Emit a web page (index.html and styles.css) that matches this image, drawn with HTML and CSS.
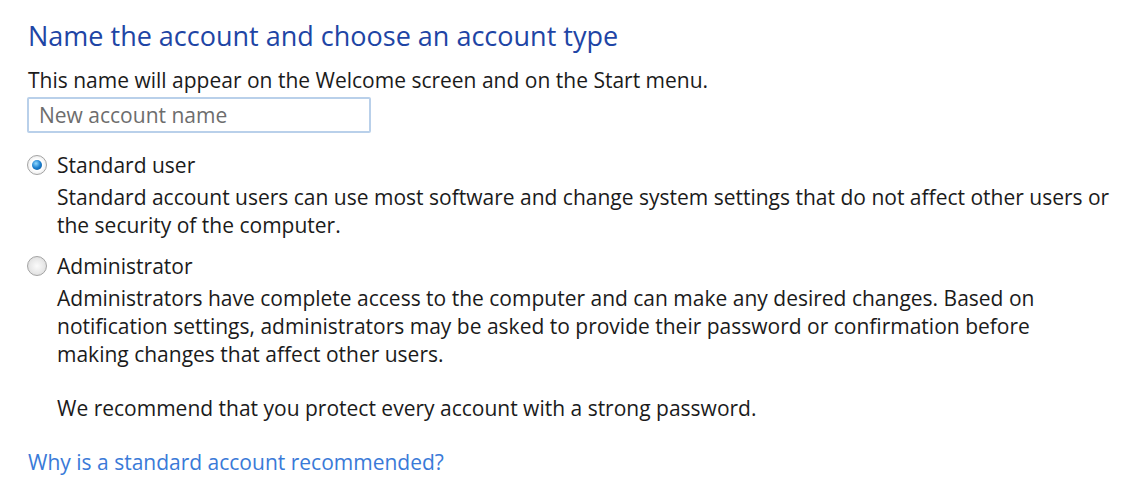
FILE: index.html
```html
<!DOCTYPE html>
<html>
<head>
<meta charset="utf-8">
<link rel="stylesheet" href="styles.css">
</head>
<body>
<div class="page">
  <h1 class="title">Name the account and choose an account type</h1>
  <p class="intro">This name will appear on the Welcome screen and on the Start menu.</p>
  <div class="field"><span class="placeholder">New account name</span></div>

  <div class="option first">
    <div class="opt-head">
      <span class="radio checked"><span class="dot"></span></span>
      <span class="opt-label">Standard user</span>
    </div>
    <p class="desc">Standard account users can use most software and change system settings that do not affect other users or the security of the computer.</p>
  </div>

  <div class="option">
    <div class="opt-head">
      <span class="radio"></span>
      <span class="opt-label">Administrator</span>
    </div>
    <p class="desc narrow">Administrators have complete access to the computer and can make any desired changes. Based on notification settings, administrators may be asked to provide their password or confirmation before making changes that affect other users.</p>
    <p class="desc rec">We recommend that you protect every account with a strong password.</p>
  </div>

  <a class="link" href="#">Why is a standard account recommended?</a>
</div>
</body>
</html>
```
FILE: styles.css
```css
html, body { margin: 0; padding: 0; background: #fff; }
body { font-family: "Open Sans", "Noto Sans", sans-serif; color: #1b1b1b; }
.page { padding: 18px 0 0 28px; width: 1085px; }
.title { margin: 0; font-weight: 400; font-size: 27px; color: #1e45a5; line-height: 36px; }
.intro { margin: 12px 0 0; font-size: 21px; line-height: 28px; }
.field { margin: 3px 0 0 -1px; width: 330px; height: 32px; border: 2px solid #b9d0ea; border-radius: 2px; display: flex; align-items: center; padding-left: 10px; }
.placeholder { font-size: 21px; color: #6d6d6d; }
.option { margin-top: 13px; }
.option.first { margin-top: 18px; }
.opt-head { display: flex; align-items: center; gap: 10px; height: 28px; margin-left: -1px; }
.radio { width: 20px; height: 20px; border-radius: 50%; border: 1px solid #a4a4a4; background: radial-gradient(circle, #fbfbfb 0%, #e8e8e8 55%, #d2d2d2 100%); display: flex; align-items: center; justify-content: center; box-sizing: border-box; }
.radio.checked { background: radial-gradient(circle, #ffffff 45%, #dcdcdc 100%); }
.dot { width: 10px; height: 10px; border-radius: 50%; background: radial-gradient(circle at 40% 35%, #8fd8ff 0%, #1a7fcf 50%, #0b4f8f 100%); }
.opt-label { font-size: 21px; line-height: 28px; }
.desc { margin: 4px 0 0 29px; font-size: 21px; line-height: 28px; }
.desc.narrow { max-width: 1042px; }
.rec { margin-top: 26px; }
.link { display: inline-block; margin-top: 26px; font-size: 21px; line-height: 28px; color: #3a7ad8; text-decoration: none; }
```
